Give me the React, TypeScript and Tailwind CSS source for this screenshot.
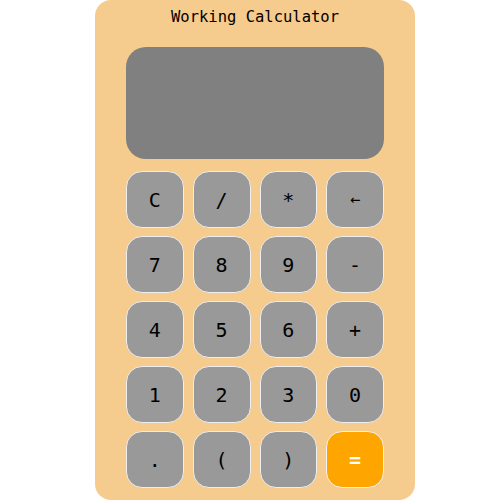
const KEYS = ['C', '/', '*', '←', '7', '8', '9', '-', '4', '5', '6', '+', '1', '2', '3', '0', '.', '(', ')', '=']

export default function App() {
  return (
    <div className="flex h-[500px] w-full bg-white pl-[95px]" style={{ fontFamily: '"DejaVu Sans Mono", "Liberation Mono", monospace' }}>
      <div className="flex h-[500px] w-[320px] flex-col rounded-[16px] bg-[#f6cb8e] px-[31px]">
        <h1 className="mt-[7px] text-center text-[15.5px] leading-[20px] text-black">Working Calculator</h1>
        <div className="mt-[20px] h-[112px] w-full rounded-[20px] bg-[#808080]" />
        <div className="mt-[12px] grid grid-cols-4 gap-x-[9px] gap-y-[8px]">
          {KEYS.map((k) => (
            <button
              key={k}
              type="button"
              className={
                k === '='
                  ? 'flex h-[57px] items-center justify-center rounded-[16px] border border-[#f3f3f3] bg-[#ffa500] text-[20px] font-bold text-white'
                  : 'flex h-[57px] items-center justify-center rounded-[16px] border border-[#eeeeee] bg-[#999999] text-[20px] text-black'
              }
            >
              {k === '←' ? <span className="text-[17px]">←</span> : k}
            </button>
          ))}
        </div>
      </div>
    </div>
  )
}
